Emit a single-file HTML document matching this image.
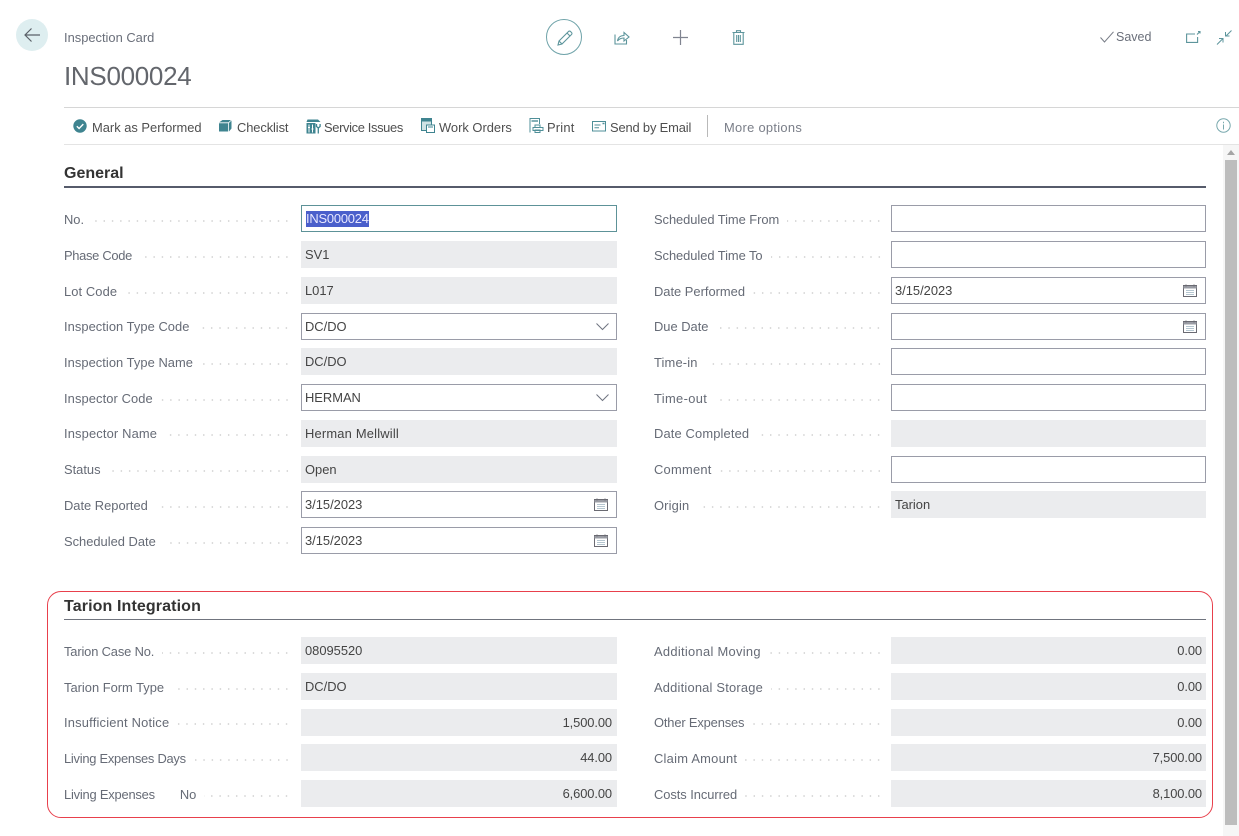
<!DOCTYPE html>
<html><head><meta charset="utf-8"><style>
html,body{margin:0;padding:0;background:#fff}
body{width:1239px;height:836px;position:relative;overflow:hidden;font-family:"Liberation Sans",sans-serif;font-size:13px;color:#505050}
.a{position:absolute;white-space:nowrap}
svg{position:absolute;overflow:visible}
.tb{position:absolute;top:119px;line-height:16px;color:#4f4f4f;white-space:nowrap;font-size:12.9px}
.h{position:absolute;left:64px;font-size:16px;font-weight:bold;color:#333;line-height:20px}
.l{position:absolute;width:227px;height:20px;line-height:20px;display:flex;color:#666b76;font-size:12.9px;white-space:nowrap;margin-top:1px}
.l.c1{left:64px}.l.c2{left:654px;width:229px}
.l i{flex:1;margin:10px 0 0 8px;height:2px;background-image:radial-gradient(circle,#d6d6d6 0.8px,transparent 1px);background-size:8.3px 2px;background-position:right top;background-repeat:repeat-x}
.f{position:absolute;height:27px;box-sizing:border-box;line-height:25px;padding:0 4px 0 3px;color:#444;font-size:12.9px;white-space:nowrap}
.f.c1{left:301px;width:316px}.f.c2{left:891px;width:315px}
.e{border:1px solid #9a9ca8;background:#fff}
.d{background:#ebecee;border:1px solid #ebecee}
.n{text-align:right;letter-spacing:-.1px}
.f.c2.n{padding-right:3px}
.cal{right:8px;top:6px}
.chev{right:7px;top:9px}
</style></head><body>

<!-- header -->
<div class="a" style="left:16px;top:19px;width:32px;height:32px;border-radius:50%;background:#deeef0"></div>
<svg style="left:16px;top:19px" width="32" height="32" fill="none" stroke="#5a6068" stroke-width="1.2"><path d="M9 16H24M15.5 9.5L9 16l6.5 6.5"/></svg>
<div class="a" style="left:64px;top:29px;line-height:17px;color:#6a6f7a;font-size:12.9px">Inspection Card</div>
<div class="a" style="left:64px;top:60px;line-height:32px;font-size:26px;color:#63666c;letter-spacing:-.3px">INS000024</div>

<div class="a" style="left:546px;top:19px;width:34px;height:34px;border:1.3px solid #6fa3a9;border-radius:50%"></div>
<svg style="left:557px;top:30px" width="16" height="16" fill="none" stroke="#5d959c" stroke-width="1.1"><path d="M1 15l1-4L11.5 1.5a1.3 1.3 0 0 1 2 0l1 1a1.3 1.3 0 0 1 0 2L5 14z M2 11l3 3 M10 3l3 3"/></svg>
<svg style="left:614px;top:30px" width="16" height="15" fill="none" stroke="#5d959c" stroke-width="1.1"><path d="M1 4.5v9.5h11.5V10 M3.5 11c.5-3.5 3-5.5 6.5-5.5V2.5l5 4.5-5 4V8c-3 0-5 1-6.5 3z"/></svg>
<svg style="left:672px;top:29px" width="17" height="17" fill="none" stroke="#808490" stroke-width="1.2"><path d="M8.5 1v15M1 8.5h15"/></svg>
<svg style="left:732px;top:30px" width="13" height="15" fill="none" stroke="#5d959c" stroke-width="1.1"><path d="M.5 2.5h12M4.5 2.5V.7h4v1.8M1.8 2.5v11.8h9.4V2.5M4.7 5v7M6.5 5v7M8.3 5v7"/></svg>

<svg style="left:1100px;top:31px" width="14" height="12" fill="none" stroke="#777c86" stroke-width="1"><path d="M.5 6.5L4.5 11 13.5.8"/></svg>
<div class="a" style="left:1116px;top:29px;line-height:17px;color:#6a6f7a;font-size:12.5px">Saved</div>
<svg style="left:1186px;top:31px" width="15" height="12" fill="none" stroke="#5d959c" stroke-width="1.1"><path d="M9 3H.6v8.4h11V6M11 3.5l3-3M12 .5h2v2"/></svg>
<svg style="left:1216px;top:30px" width="16" height="15" fill="none" stroke="#5d959c" stroke-width="1"><path d="M1 14.5L6.5 9M3 8.5h4v4 M15.5 .5L10 6M9.5 2v4h4"/></svg>

<div class="a" style="left:64px;top:107px;width:1175px;height:1px;background:#d6d6d6"></div>
<div class="a" style="left:64px;top:144px;width:1175px;height:1px;background:#e4e4e4"></div>

<!-- toolbar -->
<svg style="left:73px;top:119px" width="14" height="14"><circle cx="7" cy="7" r="6.7" fill="#3f8490"/><path d="M3.8 7.2l2.3 2.3 4.2-4.4" fill="none" stroke="#fff" stroke-width="1.4"/></svg>
<div class="tb" style="left:92px;top:120px">Mark as Performed</div>
<svg style="left:219px;top:119px" width="13" height="13"><path d="M0 3.5L3.5 1H12.5V9.5L10 12.5H0z" fill="#3f8490"/><path d="M0 3.8H9.5V12.5M9.5 3.8L12.5 1" fill="none" stroke="#fff" stroke-width=".8"/></svg>
<div class="tb" style="left:237px;top:120px;letter-spacing:-.1px">Checklist</div>
<svg style="left:306px;top:119px" width="15" height="15"><path d="M1.5 0.5H12L14.5 3H.5z" fill="#3f8490"/><rect x=".5" y="4" width="9" height="10.5" fill="#3f8490"/><path d="M3 5.5v8M6.5 5.5v8M2 8.5h2M5.5 10h2" stroke="#fff" fill="none"/><path d="M10.5 5v2.5l1.8 1.5 1.8-1.5V5M12.3 9v5.5" stroke="#3f8490" fill="none" stroke-width="1.3"/></svg>
<div class="tb" style="left:324px;top:120px;letter-spacing:-.35px">Service Issues</div>
<svg style="left:421px;top:118px" width="14" height="15" fill="none"><rect x=".5" y=".5" width="10" height="12" fill="#cfe2e4" stroke="#3f8490"/><path d="M.5 1h10v2.5H.5z" fill="#3f8490"/><rect x="5.5" y="7" width="8" height="7.5" fill="#fff" stroke="#3f8490"/><path d="M7 9h5" stroke="#3f8490"/></svg>
<div class="tb" style="left:439px;top:120px">Work Orders</div>
<svg style="left:529px;top:118px" width="15" height="15" fill="none" stroke="#4f8f98"><path d="M1 14.5V.5h9.5V6"/><path d="M2.5 3h6.5" stroke-width="1.4"/><path d="M6 7h5v2.5H6zM4 9.5h10v3H4zM6 12h5v2.5H6z" fill="#fff"/></svg>
<div class="tb" style="left:547px;top:120px;letter-spacing:.2px">Print</div>
<svg style="left:592px;top:121px" width="14" height="11" fill="none" stroke="#4f8f98"><rect x=".5" y=".5" width="13" height="9.5"/><path d="M2.5 4h6M2.5 6.8h4.5"/><path d="M10.5 2.5h2" stroke-width="1.5"/></svg>
<div class="tb" style="left:610px;top:120px;letter-spacing:-.15px">Send by Email</div>
<div class="a" style="left:707px;top:115px;width:1px;height:22px;background:#b9b9b9"></div>
<div class="tb" style="left:724px;top:120px;color:#7a7e88;letter-spacing:.3px">More options</div>
<svg style="left:1216px;top:118px" width="15" height="15" fill="none" stroke="#79a9ae"><circle cx="7.5" cy="7.5" r="6.7"/><path d="M7.5 6.5v5M7.5 3.8v1.4"/></svg>

<!-- scrollbar -->
<div class="a" style="left:1223px;top:145px;width:16px;height:691px;background:#f6f6f6"></div>
<div class="a" style="left:1225px;top:160px;width:12px;height:665px;background:#bdbdbd"></div>
<svg style="left:1227px;top:150px" width="8" height="5"><path d="M0 5L4 0l4 5z" fill="#a5a5a5"/></svg>

<!-- General -->
<div class="h" style="top:164px">General</div>
<div class="a" style="left:64px;top:186px;width:1142px;height:2px;background:#565b6b"></div>

<div class="l c1" style="top:209px">No.<i></i></div>
<div class="f c1" style="top:205px;border:1px solid #5d9298;padding-left:4px"><span style="background:#4a5fcb;color:#e8e8ff;display:inline-block;line-height:16px;letter-spacing:-.2px">INS000024</span></div>
<div class="l c1" style="top:245px"><span style="letter-spacing:-.3px">Phase Code</span><i></i></div>
<div class="f c1 d" style="top:241px">SV1</div>
<div class="l c1" style="top:281px"><span style="letter-spacing:.1px">Lot Code</span><i></i></div>
<div class="f c1 d" style="top:277px">L017</div>
<div class="l c1" style="top:316px"><span style="letter-spacing:.05px">Inspection Type Code</span><i></i></div>
<div class="f c1 e" style="top:313px">DC/DO<svg class="chev" width="13" height="7" fill="none" stroke="#6f7480"><path d="M.5 .5L6.5 6.5 12.5 .5"/></svg></div>
<div class="l c1" style="top:352px"><span style="letter-spacing:.05px">Inspection Type Name</span><i></i></div>
<div class="f c1 d" style="top:348px">DC/DO</div>
<div class="l c1" style="top:388px"><span style="letter-spacing:.1px">Inspector Code</span><i></i></div>
<div class="f c1 e" style="top:384px">HERMAN<svg class="chev" width="13" height="7" fill="none" stroke="#6f7480"><path d="M.5 .5L6.5 6.5 12.5 .5"/></svg></div>
<div class="l c1" style="top:423px"><span style="letter-spacing:.15px">Inspector Name</span><i></i></div>
<div class="f c1 d" style="top:420px"><span style="letter-spacing:.2px">Herman Mellwill</span></div>
<div class="l c1" style="top:459px">Status<i></i></div>
<div class="f c1 d" style="top:456px">Open</div>
<div class="l c1" style="top:495px">Date Reported<i></i></div>
<div class="f c1 e" style="top:491px">3/15/2023<svg class="cal" width="14" height="13" fill="none"><rect x=".5" y="1.5" width="13" height="11" stroke="#6a6a72"/><path d="M.5 2h13v2.5H.5z" fill="#9a9ca4"/><path d="M3 6.5h8M3 8.5h8M3 10.5h8" stroke="#b5c6d0"/><path d="M3 .5v2M11 .5v2" stroke="#6a6a72"/></svg></div>
<div class="l c1" style="top:531px">Scheduled Date<i></i></div>
<div class="f c1 e" style="top:527px">3/15/2023<svg class="cal" width="14" height="13" fill="none"><rect x=".5" y="1.5" width="13" height="11" stroke="#6a6a72"/><path d="M.5 2h13v2.5H.5z" fill="#9a9ca4"/><path d="M3 6.5h8M3 8.5h8M3 10.5h8" stroke="#b5c6d0"/><path d="M3 .5v2M11 .5v2" stroke="#6a6a72"/></svg></div>

<div class="l c2" style="top:209px"><span style="letter-spacing:-.05px">Scheduled Time From</span><i></i></div>
<div class="f c2 e" style="top:205px"></div>
<div class="l c2" style="top:245px"><span style="letter-spacing:-.05px">Scheduled Time To</span><i></i></div>
<div class="f c2 e" style="top:241px"></div>
<div class="l c2" style="top:281px">Date Performed<i></i></div>
<div class="f c2 e" style="top:277px">3/15/2023<svg class="cal" width="14" height="13" fill="none"><rect x=".5" y="1.5" width="13" height="11" stroke="#6a6a72"/><path d="M.5 2h13v2.5H.5z" fill="#9a9ca4"/><path d="M3 6.5h8M3 8.5h8M3 10.5h8" stroke="#b5c6d0"/><path d="M3 .5v2M11 .5v2" stroke="#6a6a72"/></svg></div>
<div class="l c2" style="top:316px">Due Date<i></i></div>
<div class="f c2 e" style="top:313px"><svg class="cal" width="14" height="13" fill="none"><rect x=".5" y="1.5" width="13" height="11" stroke="#6a6a72"/><path d="M.5 2h13v2.5H.5z" fill="#9a9ca4"/><path d="M3 6.5h8M3 8.5h8M3 10.5h8" stroke="#b5c6d0"/><path d="M3 .5v2M11 .5v2" stroke="#6a6a72"/></svg></div>
<div class="l c2" style="top:352px"><span style="letter-spacing:.15px">Time-in</span><i></i></div>
<div class="f c2 e" style="top:348px"></div>
<div class="l c2" style="top:388px"><span style="letter-spacing:.35px">Time-out</span><i></i></div>
<div class="f c2 e" style="top:384px"></div>
<div class="l c2" style="top:423px"><span style="letter-spacing:.15px">Date Completed</span><i></i></div>
<div class="f c2 d" style="top:420px"></div>
<div class="l c2" style="top:459px"><span style="letter-spacing:.25px">Comment</span><i></i></div>
<div class="f c2 e" style="top:456px"></div>
<div class="l c2" style="top:495px"><span style="letter-spacing:.15px">Origin</span><i></i></div>
<div class="f c2 d" style="top:491px">Tarion</div>

<!-- Tarion -->
<div class="a" style="left:47px;top:591px;width:1166px;height:227px;box-sizing:border-box;border:1px solid #e8404c;border-radius:14px"></div>
<div class="h" style="top:597px;letter-spacing:.12px">Tarion Integration</div>
<div class="a" style="left:64px;top:619px;width:1142px;height:1px;background:#70747e"></div>

<div class="l c1" style="top:641px"><span style="letter-spacing:-.15px">Tarion Case No.</span><i></i></div>
<div class="f c1 d" style="top:637px">08095520</div>
<div class="l c1" style="top:677px">Tarion Form Type<i></i></div>
<div class="f c1 d" style="top:673px">DC/DO</div>
<div class="l c1" style="top:712px"><span style="letter-spacing:.2px">Insufficient Notice</span><i></i></div>
<div class="f c1 d n" style="top:709px">1,500.00</div>
<div class="l c1" style="top:748px"><span style="letter-spacing:-.25px">Living Expenses Days</span><i></i></div>
<div class="f c1 d n" style="top:744px">44.00</div>
<div class="l c1" style="top:784px"><span style="letter-spacing:-.2px">Living Expenses</span><span style="margin-left:25px">No</span><i></i></div>
<div class="f c1 d n" style="top:780px">6,600.00</div>

<div class="l c2" style="top:641px"><span style="letter-spacing:.3px">Additional Moving</span><i></i></div>
<div class="f c2 d n" style="top:637px">0.00</div>
<div class="l c2" style="top:677px"><span style="letter-spacing:.2px">Additional Storage</span><i></i></div>
<div class="f c2 d n" style="top:673px">0.00</div>
<div class="l c2" style="top:712px"><span style="letter-spacing:-.15px">Other Expenses</span><i></i></div>
<div class="f c2 d n" style="top:709px">0.00</div>
<div class="l c2" style="top:748px"><span style="letter-spacing:.25px">Claim Amount</span><i></i></div>
<div class="f c2 d n" style="top:744px">7,500.00</div>
<div class="l c2" style="top:784px"><span style="letter-spacing:-.05px">Costs Incurred</span><i></i></div>
<div class="f c2 d n" style="top:780px">8,100.00</div>
</body></html>
